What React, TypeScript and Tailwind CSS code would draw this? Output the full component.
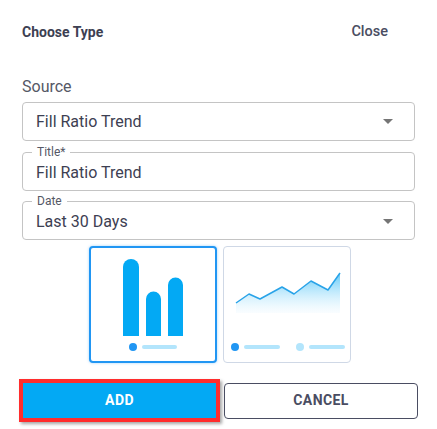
import React from "react";

function Caret() {
  return (
    <svg width="10" height="5" viewBox="0 0 10 5" className="shrink-0">
      <path d="M0 0 L10 0 L5 5 Z" fill="#757575" />
    </svg>
  );
}

function SelectBox({ value }: { value: string }) {
  return (
    <div className="flex h-[39px] items-center justify-between rounded border border-[#c4c4c4] pl-[13px] pr-[21px]">
      <span className="text-[16px] text-[#3d4052]">{value}</span>
      <Caret />
    </div>
  );
}

function OutlinedField({ label, value, select }: { label: string; value: string; select?: boolean }) {
  return (
    <div className="relative flex h-[39px] items-center justify-between rounded border border-[#c4c4c4] pl-[13px] pr-[21px] pt-[2px]">
      <span className="absolute -top-[8px] left-[9px] bg-white px-[5px] text-[12px] leading-[14px] text-[#555866]">
        {label}
      </span>
      <span className="text-[16px] text-[#3d4052]">{value}</span>
      {select && <Caret />}
    </div>
  );
}

function BarCard() {
  return (
    <div className="h-[117px] w-[128px] rounded-[4px] border-2 border-[#2196f3] bg-white shadow-[0_0_3px_rgba(33,150,243,0.4)]">
      <svg width="124" height="113" viewBox="0 0 124 113">
        <path d="M32 19 a8 8 0 0 1 16 0 V88 H32 Z" fill="#03a9f4" />
        <path d="M55 51 a7.5 7.5 0 0 1 15 0 V88 H55 Z" fill="#03a9f4" />
        <path d="M77 37 a7.5 7.5 0 0 1 15 0 V88 H77 Z" fill="#03a9f4" />
        <circle cx="42" cy="99" r="4" fill="#2196f3" />
        <rect x="51" y="97" width="35" height="4" rx="2" fill="#b3e5fc" />
      </svg>
    </div>
  );
}

function LineCard() {
  return (
    <div className="h-[117px] w-[128px] rounded-[4px] border border-[#cfd8e6] bg-white">
      <svg width="126" height="115" viewBox="0 0 126 115">
        <defs>
          <linearGradient id="area" x1="0" y1="0" x2="0" y2="1">
            <stop offset="0%" stopColor="#4fc3f7" stopOpacity="0.9" />
            <stop offset="100%" stopColor="#e1f5fe" stopOpacity="0.2" />
          </linearGradient>
        </defs>
        <path
          d="M12 56 L25 47 L36 52 L58 40 L70 47 L87 34 L104 43 L116 26 L116 66 L12 66 Z"
          fill="url(#area)"
        />
        <path
          d="M12 56 L25 47 L36 52 L58 40 L70 47 L87 34 L104 43 L116 26"
          fill="none"
          stroke="#29a3e8"
          strokeWidth="1.5"
          strokeLinejoin="round"
        />
        <circle cx="11" cy="100" r="4" fill="#2196f3" />
        <rect x="20" y="98" width="36" height="4" rx="2" fill="#b3e5fc" />
        <circle cx="76" cy="100" r="4" fill="#b3e5fc" />
        <rect x="85" y="98" width="36" height="4" rx="2" fill="#b3e5fc" />
      </svg>
    </div>
  );
}

export default function App() {
  return (
    <div className="h-[429px] w-[437px] bg-white font-['Roboto','Liberation_Sans',sans-serif]">
      <div className="flex items-center justify-between pl-[22px] pr-[49px] pt-[22px]">
        <span className="text-[14px] font-bold leading-[20px] text-[#3d4052]">Choose Type</span>
        <span className="text-[14.5px] font-medium leading-[20px] text-[#4a4d62]">Close</span>
      </div>

      <div className="mx-[22px] mt-[36px]">
        <div className="mb-[6px] text-[16px] leading-[18px] text-[#555866]">Source</div>
        <SelectBox value="Fill Ratio Trend" />
        <div className="mt-[11px] flex flex-col gap-[10px]">
          <OutlinedField label="Title*" value="Fill Ratio Trend" />
          <OutlinedField label="Date" value="Last 30 Days" select />
        </div>
      </div>

      <div className="mt-[6px] flex gap-[6px] pl-[89px]">
        <BarCard />
        <LineCard />
      </div>

      <div className="mx-[19px] mt-[16px] flex items-center gap-[4px]">
        <div className="w-[201px] border-4 border-[#ff2d2d] shadow-[2px_2px_3px_rgba(0,0,0,0.35)]">
          <button className="flex h-[35px] w-full items-center justify-center bg-[#03a9f4] text-[14px] font-bold tracking-[0.4px] text-white">
            ADD
          </button>
        </div>
        <button className="flex h-[36px] flex-1 items-center justify-center rounded border border-[#4a4d62] text-[14px] font-bold tracking-[0.4px] text-[#4a4d62]">
          CANCEL
        </button>
      </div>
    </div>
  );
}
